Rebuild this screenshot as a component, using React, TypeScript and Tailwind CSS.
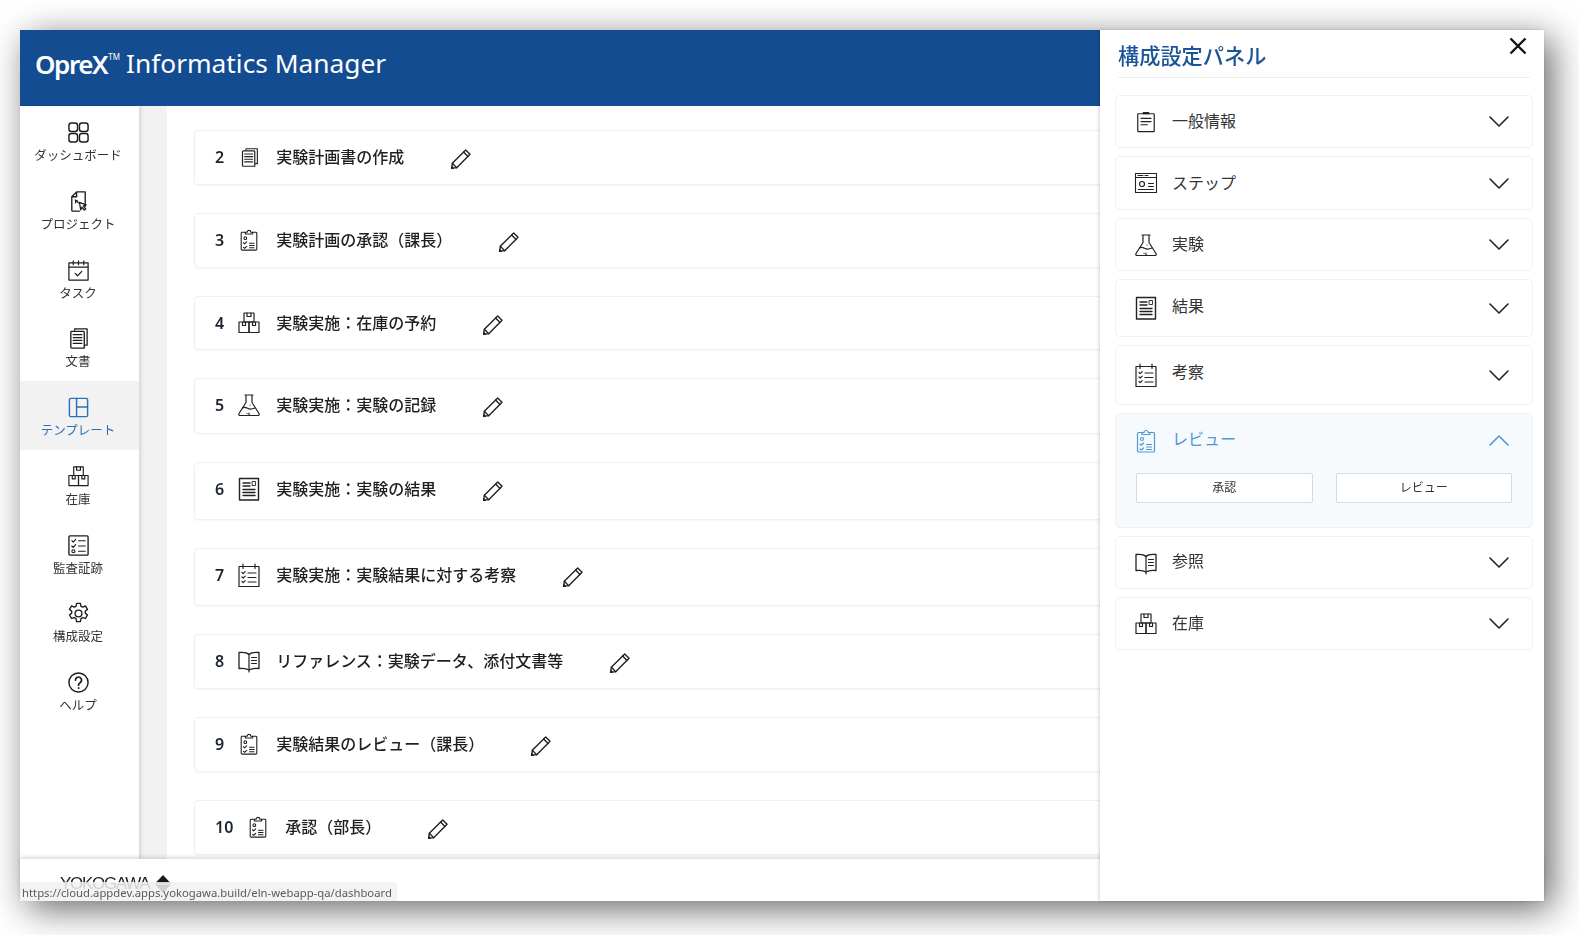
import React from "react";

type IconProps = { className?: string };
const Svg = ({ className, children }: IconProps & { children: React.ReactNode }) => (
  <svg viewBox="0 0 24 24" fill="none" stroke="currentColor" strokeWidth={1.2} strokeLinecap="round" strokeLinejoin="round" className={className}>
    {children}
  </svg>
);

const Dashboard = (p: IconProps) => (
  <Svg {...p}>
    <rect x="2" y="2" width="9" height="9" rx="2.6" strokeWidth={1.5} />
    <rect x="13" y="2" width="9" height="9" rx="2.6" strokeWidth={1.5} />
    <rect x="2" y="13" width="9" height="9" rx="2.6" strokeWidth={1.5} />
    <rect x="13" y="13" width="9" height="9" rx="2.6" strokeWidth={1.5} />
  </Svg>
);
const Project = (p: IconProps) => (
  <Svg {...p}>
    <path d="M10 2h9v15M13 22H6a1 1 0 0 1-1-1V7l5-5v5H5" strokeWidth={1.4} />
    <path d="M8.5 10.5l2.5 1M9 10.5l3 3M9 10.5v3" />
    <path d="M13 13l7 2.5-3 1.2 2.6 3-1.4 1.3-2.7-3-1.2 2.8z" strokeWidth={1.3} />
  </Svg>
);
const Task = (p: IconProps) => (
  <Svg {...p}>
    <rect x="2" y="4" width="20" height="18" strokeWidth={1.3} />
    <path d="M2 8.5h20M6.5 2v4M12 2v4M17.5 2v4M8.5 15l2.5 2.5 4.5-4.5" />
  </Svg>
);
const Docs = (p: IconProps) => (
  <Svg {...p}>
    <path d="M8 3.5V2h13v17h-2" strokeWidth={1.3} />
    <path d="M5 4.500h12a1 1 0 0 1 1 1V22H5a1 1 0 0 1-1-1V5.500a1 1 0 0 1 1-1z" strokeWidth={1.4} />
    <path d="M6.500 8h9M6.500 11h9M6.500 14h9M6.500 17h9" strokeWidth={1.3} />
  </Svg>
);
const Template = (p: IconProps) => (
  <Svg {...p}>
    <rect x="2.500" y="2.500" width="19" height="19" rx="1.500" strokeWidth={1.5} />
    <path d="M10 2.500v19M10 11.500h11.500" strokeWidth={1.5} />
  </Svg>
);
const Boxes = (p: IconProps) => (
  <Svg {...p}>
    <rect x="7" y="2" width="10" height="9" />
    <path d="M10 2v3.500h4V2" />
    <rect x="2" y="11" width="10" height="10.500" />
    <rect x="12" y="11" width="10" height="10.500" />
    <path d="M5.500 11v3.500h3V11M15.500 11v3.500h3V11" />
  </Svg>
);
const Checklist = (p: IconProps) => (
  <Svg {...p}>
    <rect x="2" y="2" width="20" height="20" rx="1" strokeWidth={1.4} />
    <path d="M5 7l1.500 1.500 2.500-3M5 12.500l1.500 1.500 2.500-3M12 7h7M12 12.500h7M12 18h7" />
    <circle cx="6.700" cy="18" r="1.600" />
  </Svg>
);
const Gear = (p: IconProps) => (
  <Svg {...p}>
    <circle cx="12" cy="12" r="3.600" strokeWidth={1.4} />
    <path
      strokeWidth={1.4}
      d="M10 1.500h4l.6 3 1.900.9 2.700-1.400 2.200 3.700-2.400 2 .1 1.900 2.300 1.900-2.200 3.700-2.800-1-1.800 1.100-.6 3.200h-4l-.6-3.200-1.800-1.100-2.800 1-2.200-3.700 2.300-1.900.1-1.900-2.400-2L4.800 4l2.700 1.400 1.900-.9z"
    />
  </Svg>
);
const Help = (p: IconProps) => (
  <Svg {...p}>
    <circle cx="12" cy="12" r="10" strokeWidth={1.5} />
    <path d="M8.800 9.500a3.200 3.200 0 1 1 4.900 2.700c-1.100.7-1.700 1.300-1.700 2.600" strokeWidth={1.8} />
    <circle cx="12" cy="17.800" r=".5" fill="currentColor" strokeWidth={1} />
  </Svg>
);
const Review = (p: IconProps) => (
  <Svg {...p}>
    <path d="M8 3.500H4.500a1 1 0 0 0-1 1V22a1 1 0 0 0 1 1h15a1 1 0 0 0 1-1V4.500a1 1 0 0 0-1-1H16" />
    <path d="M8 5.500V3.500h2a2 2 0 0 1 4 0h2v2z" />
    <circle cx="8" cy="10" r="1.500" />
    <path d="M6 15l1.300 1.300L9.500 14M6 20l1.300 1 2.200-2M12.500 15.500h5M12.500 18h5M12.500 20.500h5" />
  </Svg>
);
const Flask = (p: IconProps) => (
  <Svg {...p}>
    <path d="M8 2h8M9 2v7.500L2 20.500c-.6 1 .1 2 1 2h18c.9 0 1.600-1 1-2L15 9.500V2" />
    <path d="M5.500 15c2-1.500 3-1 5 .3s4 1.200 7.500-.3M10 20.500h.1M13 12h.1M12 22v-2" />
  </Svg>
);
const Result = (p: IconProps) => (
  <Svg {...p}>
    <rect x="2.500" y="1.500" width="19" height="21.500" strokeWidth={1.4} />
    <path d="M6 6h7M6 9h7M6 12.500h12M6 15.500h12M6 18.500h12" strokeWidth={1.4} />
    <rect x="15.500" y="4.500" width="3" height="4" strokeWidth={0.9} />
  </Svg>
);
const Notes = (p: IconProps) => (
  <Svg {...p}>
    <rect x="2" y="3.500" width="20" height="20" strokeWidth={1.2} />
    <path d="M6 1v4.500M18 1v4.500" />
    <path d="M5 9.500l1.200 1.200 2-2M5 14l1.200 1.200 2-2M5 18.500l1.200 1.200 2-2M11 10h8M11 14.500h8M11 19h8" />
  </Svg>
);
const Book = (p: IconProps) => (
  <Svg {...p}>
    <path d="M12 5.500C10 3.500 6 3 2 3.500v16c4-.5 7.500-.2 10 1.500 2.500-1.700 6-2 10-1.500v-16c-4-.5-8 0-10 2z" strokeWidth={1.3} />
    <path d="M12 5.500V23M14.500 8.500h5M14.500 11.500h5M14.500 14.500h5" />
  </Svg>
);
const Info = (p: IconProps) => (
  <Svg {...p}>
    <rect x="3" y="3" width="18" height="19.500" rx=".8" strokeWidth={1.3} />
    <path d="M9 3V1.800h6V3z" />
    <path d="M6.500 8h11M6.500 11.500h11M6.500 15h7" strokeWidth={1.3} />
  </Svg>
);
const Step = (p: IconProps) => (
  <Svg {...p}>
    <rect x="1.500" y="2.500" width="21" height="19" strokeWidth={1.1} />
    <path d="M1.500 6.500h21M4 4.500h5M11 4.500h3M14.500 12.500h5M14.500 15.500h5M4.500 18.500h15" />
    <circle cx="8" cy="13" r="2.500" />
  </Svg>
);
const Pencil = (p: IconProps) => (
  <Svg {...p}>
    <path d="M3.200 16.600L16 3.800l4.200 4.200L7.400 20.800 2.500 21.500z" strokeWidth={1.3} />
    <path d="M14 5.800l4.200 4.200M3.200 16.600l4.200 4.200" strokeWidth={1.3} />
    <path d="M2.500 21.500l1.800-.3-1.500-1.500z" fill="currentColor" strokeWidth={1} />
  </Svg>
);
const Chevron = ({ up, className }: { up?: boolean; className?: string }) => (
  <svg viewBox="0 0 20 11" fill="none" stroke="currentColor" strokeWidth={1.6} strokeLinecap="round" strokeLinejoin="round" className={className}>
    <path d={up ? "M1 10l9-9 9 9" : "M1 1l9 9 9-9"} />
  </svg>
);

const nav: { label: string; Icon: (p: IconProps) => React.ReactElement; active?: boolean }[] = [
  { label: "ダッシュボード", Icon: Dashboard },
  { label: "プロジェクト", Icon: Project },
  { label: "タスク", Icon: Task },
  { label: "文書", Icon: Docs },
  { label: "テンプレート", Icon: Template, active: true },
  { label: "在庫", Icon: Boxes },
  { label: "監査証跡", Icon: Checklist },
  { label: "構成設定", Icon: Gear },
  { label: "ヘルプ", Icon: Help },
];

const rows: { n: number; Icon: (p: IconProps) => React.ReactElement; text: string; h: string; size: string }[] = [
  { n: 2, Icon: Docs, text: "実験計画書の作成", h: "h-[55px]", size: "h-[21px] w-[21px]" },
  { n: 3, Icon: Review, text: "実験計画の承認（課長）", h: "h-[55px]", size: "h-[22px] w-[22px]" },
  { n: 4, Icon: Boxes, text: "実験実施：在庫の予約", h: "h-[54px]", size: "h-[24px] w-[24px]" },
  { n: 5, Icon: Flask, text: "実験実施：実験の記録", h: "h-[56px]", size: "h-[24px] w-[24px]" },
  { n: 6, Icon: Result, text: "実験実施：実験の結果", h: "h-[58px]", size: "h-[24px] w-[24px]" },
  { n: 7, Icon: Notes, text: "実験実施：実験結果に対する考察", h: "h-[58px]", size: "h-[24px] w-[24px]" },
  { n: 8, Icon: Book, text: "リファレンス：実験データ、添付文書等", h: "h-[55px]", size: "h-[24px] w-[24px]" },
  { n: 9, Icon: Review, text: "実験結果のレビュー（課長）", h: "h-[55px]", size: "h-[22px] w-[22px]" },
  { n: 10, Icon: Review, text: "承認（部長）", h: "h-[55px]", size: "h-[22px] w-[22px]" },
];

type Sec = { label: string; Icon: (p: IconProps) => React.ReactElement; h: string; lift: string; size: string };
const sections: Sec[] = [
  { label: "一般情報", Icon: Info, h: "h-[53px]", lift: "pb-[2px]", size: "h-[22px] w-[22px]" },
  { label: "ステップ", Icon: Step, h: "h-[54px]", lift: "pb-[1px]", size: "h-[24px] w-[24px]" },
  { label: "実験", Icon: Flask, h: "h-[53px]", lift: "pb-[2px]", size: "h-[24px] w-[24px]" },
  { label: "結果", Icon: Result, h: "h-[58px]", lift: "pb-[4px]", size: "h-[24px] w-[24px]" },
  { label: "考察", Icon: Notes, h: "h-[60px]", lift: "pb-[6px]", size: "h-[24px] w-[24px]" },
];
const sections2: Sec[] = [
  { label: "参照", Icon: Book, h: "h-[53px]", lift: "pb-[3px]", size: "h-[24px] w-[24px]" },
  { label: "在庫", Icon: Boxes, h: "h-[53px]", lift: "pb-[1px]", size: "h-[24px] w-[24px]" },
];

const Section = ({ s }: { s: Sec }) => (
  <div className={`${s.h} flex items-center rounded-[5px] border border-[#f0f1f3] bg-white pl-[18px] pr-[23px] text-[#333]`}>
    <span className="flex w-[24px] shrink-0 justify-center">
      <s.Icon className={`${s.size} text-[#222]`} />
    </span>
    <span className={`ml-[14px] flex-1 text-[16px] ${s.lift}`}>{s.label}</span>
    <Chevron className="h-[11px] w-[20px] text-[#1d2530]" />
  </div>
);

export default function App() {
  return (
    <div
      className="h-[935px] w-[1579px] overflow-hidden bg-white pl-[20px] pt-[30px] text-[#222]"
      style={{ fontFamily: '"Noto Sans", "Noto Sans CJK JP", sans-serif' }}
    >
      <div className="relative flex h-[871px] w-[1524px] flex-col bg-white shadow-[8px_8px_34px_rgba(0,0,0,0.6)] blur-[0.3px]">
        <header className="flex h-[76px] shrink-0 items-center bg-[#144c91] pb-[9px] pl-[15px] text-white">
          <span className="text-[26px] font-semibold leading-none tracking-[-1.4px]">OpreX</span>
          <span className="mb-[13px] ml-[1px] text-[8px] leading-none">TM</span>
          <span className="ml-[6px] text-[26.300px] leading-none">Informatics Manager</span>
        </header>

        <div className="flex min-h-0 flex-1">
          <nav className="z-10 w-[119px] shrink-0 bg-white shadow-[2px_0_4px_rgba(0,0,0,0.12)]">
            {nav.map(({ label, Icon, active }) => (
              <div
                key={label}
                className={`flex h-[68.750px] flex-col items-center pr-[3px] pt-[15px] ${active ? "bg-[#f2f2f2] text-[#2f6fb3]" : "text-[#333]"}`}
              >
                <Icon className={`h-[23px] w-[23px] ${active ? "" : "text-[#1c1c1c]"}`} />
                <span className="mt-[3px] text-[12.500px] leading-[18px]">{label}</span>
              </div>
            ))}
          </nav>
          <div className="w-[28px] shrink-0 bg-[#f2f2f2]" />
          <main className="flex min-w-0 flex-1 flex-col gap-[28px] overflow-hidden pl-[27px] pt-[24px]">
            {rows.map((r) => (
              <div
                key={r.n}
                className={`${r.h} flex w-[1000px] shrink-0 items-start rounded-[4px] border border-[#f0f0f0] bg-white pl-[20px] pt-[12px] shadow-[0_1px_2px_rgba(0,0,0,0.04)]`}
              >
                <div className="flex h-[28px] items-center">
                  <span className="text-[16px] font-semibold text-[#1c2530]">{r.n}</span>
                  <span className="ml-[13px] flex w-[24px] justify-center">
                    <r.Icon className={`${r.size} text-[#222]`} />
                  </span>
                  <span className="ml-[15px] text-[16px] font-medium text-[#1f1f1f]">{r.text}</span>
                  <Pencil className="ml-[45px] h-[25px] w-[25px] translate-y-[1px] text-[#1f1f1f]" />
                </div>
              </div>
            ))}
          </main>
        </div>

        <footer className="z-10 flex h-[42px] shrink-0 items-start bg-white pl-[40px] pt-[15px] shadow-[0_-2px_4px_rgba(0,0,0,0.14)]">
          <span className="text-[17px] leading-[20px] tracking-[-1.3px] text-[#222]" style={{ fontFamily: '"Liberation Sans", sans-serif' }}>
            YOKOGAWA
          </span>
          <svg viewBox="0 0 16 18" className="ml-[6px] mt-[1px] h-[18px] w-[16px]">
            <path d="M8 0l8 8.500H0z" fill="#1a1a1a" />
            <path d="M0 9.500h16L8 18z" fill="#1a1a1a" />
          </svg>
        </footer>

        <div className="absolute bottom-0 left-0 z-20 flex h-[19px] w-[377px] items-center whitespace-nowrap rounded-tr-[3px] bg-[#f1f1f1]/85 pl-[2px] pt-[3px] text-[11.300px] text-[#5a5a5a]">
          https://cloud.appdev.apps.yokogawa.build/eln-webapp-qa/dashboard
        </div>

        <aside className="absolute bottom-0 right-0 top-0 z-30 flex w-[444px] flex-col bg-white pl-[15px] pr-[11px] shadow-[-1px_0_3px_rgba(0,0,0,0.18)]">
          <div className="relative mx-[3px] flex h-[48px] shrink-0 items-center border-b border-[#eeeeee] pt-[5px]">
            <h1 className="text-[21.200px] font-medium text-[#1a5596]">構成設定パネル</h1>
            <svg viewBox="0 0 18 18" fill="none" stroke="#111" strokeWidth={2.4} className="absolute right-[3px] top-[7px] h-[18px] w-[18px]">
              <path d="M1.500 1.500l15 15M16.500 1.500l-15 15" />
            </svg>
          </div>
          <div className="mt-[17px] flex flex-col gap-[8px]">
            {sections.map((s) => (
              <Section key={s.label} s={s} />
            ))}
            <div className="h-[115px] rounded-[5px] border border-[#eef1f5] bg-[#f6fafd] px-[20px]">
              <div className="-ml-[2px] flex h-[53px] items-center pr-[3px] text-[#4f98d8]">
                <Review className="h-[24px] w-[24px] shrink-0" />
                <span className="ml-[14px] flex-1 pb-[3px] text-[16px]">レビュー</span>
                <Chevron up className="h-[11px] w-[20px]" />
              </div>
              <div className="mt-[6px] flex gap-[23px]">
                {["承認", "レビュー"].map((b) => (
                  <button
                    key={b}
                    className="h-[30px] flex-1 rounded-[2px] border border-[#d9d9d9] bg-white text-[12px] text-[#333]"
                  >
                    {b}
                  </button>
                ))}
              </div>
            </div>
            {sections2.map((s) => (
              <Section key={s.label} s={s} />
            ))}
          </div>
        </aside>
      </div>
    </div>
  );
}
